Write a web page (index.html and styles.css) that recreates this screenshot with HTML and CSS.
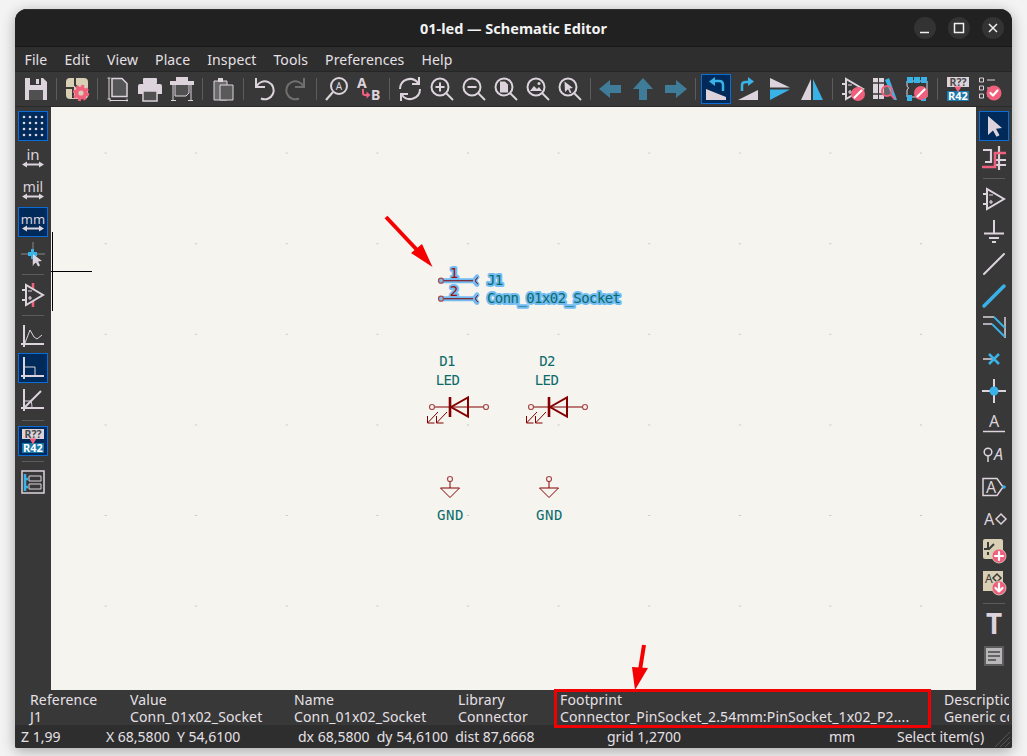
FILE: index.html
```html
<!DOCTYPE html>
<html lang="en">
<head>
<meta charset="utf-8">
<title>01-led — Schematic Editor</title>
<link rel="stylesheet" href="styles.css">
</head>
<body>
<svg class="defs" width="0" height="0" aria-hidden="true">
  <defs>
    <symbol id="pencil" viewBox="0 0 14 14"><circle class="f-r" cx="7" cy="7" r="7"/><path class="s-w" d="M3.5 10.5 10.5 3.5"/></symbol>
    <symbol id="amp" viewBox="0 0 24 24"><path class="s-l" d="M5 2v20L22 12z"/><path class="s-l" d="M1 7h4M1 17h4M5 12"/><path class="s-t" d="M7 8h4M7 15h4M9 13v4"/></symbol>
    <symbol id="mag" viewBox="0 0 24 24"><circle class="s-l" cx="10" cy="10" r="8.5"/><path class="s-l" d="M16 16l7 7"/></symbol>
    <symbol id="r42" viewBox="0 0 24 24"><rect class="f-l" x="1" y="0" width="22" height="10"/><text class="t-rq" x="12" y="8.8">R??</text><rect class="f-bd" x="1" y="14" width="22" height="10"/><text class="t-r42" x="12" y="23.3">R42</text><path class="f-r" d="M8.5 9.5h7L12 15.5z"/></symbol>
  </defs>
</svg>

<div class="window">
  <header class="titlebar">
    <h1 class="title">01-led — Schematic Editor</h1>
    <div class="winbtns">
      <span class="winbtn"><svg class="wico" viewBox="0 0 12 12"><path d="M1 10.5h9"/></svg></span>
      <span class="winbtn"><svg class="wico" viewBox="0 0 12 12"><rect x="1.5" y="1.5" width="9" height="9"/></svg></span>
      <span class="winbtn"><svg class="wico" viewBox="0 0 12 12"><path d="M2 2l8 8M10 2l-8 8"/></svg></span>
    </div>
  </header>

  <nav class="menubar">
    <span class="menu">File</span><span class="menu">Edit</span><span class="menu">View</span><span class="menu">Place</span><span class="menu">Inspect</span><span class="menu">Tools</span><span class="menu">Preferences</span><span class="menu">Help</span>
  </nav>

  <div class="toolbar hbar">
    <span class="tool"><svg class="ico" viewBox="0 0 24 24"><path class="f-l" d="M1 1h18l4 4v18H1z"/><rect class="f-d" x="6" y="1" width="11" height="7"/><rect class="f-l" x="12" y="2" width="3" height="5"/><rect class="f-g" x="5" y="13" width="14" height="10"/></svg></span>
    <i class="sep"></i>
    <span class="tool"><svg class="ico" viewBox="0 0 24 24"><rect class="f-y" x="1" y="1" width="22" height="21" rx="4"/><path class="s-k" d="M10 1v7l4 4M1 11h7v5M8 21v-5"/><circle class="f-r" cx="16" cy="16" r="6.5"/><circle class="s-gear" cx="16" cy="16" r="7"/><circle class="f-y" cx="16" cy="16" r="2.6"/></svg></span>
    <i class="sep"></i>
    <span class="tool"><svg class="ico" viewBox="0 0 24 24"><path class="s-th" d="M3 1v21M1.500 1h3M1.500 22h3M4 23.500h18M4 21.500v3M21 21.500v3"/><path class="s-p" d="M6 1.500h10l5 5v13H6z"/></svg></span>
    <span class="tool"><svg class="ico" viewBox="0 0 24 24"><rect class="f-l" x="5" y="1" width="14" height="6" rx="1"/><path class="f-l" d="M2 7h20q2 0 2 2v8h-5v-3H5v3H0V9q0-2 2-2z"/><rect class="f-g" x="6" y="14" width="12" height="9"/><path class="s-l2" d="M5 14h14v10H5z"/></svg></span>
    <span class="tool"><svg class="ico" viewBox="0 0 24 24"><rect class="f-l" x="6" y="0" width="12" height="4"/><rect class="f-l" x="0" y="4" width="24" height="4"/><path class="f-g" d="M5 8h14v8l-3 3H5z"/><path class="s-th" d="M5 8v11h11l3-3V8M3 8v15M21 8v15M1 23.500h5M18 23.500h5"/></svg></span>
    <i class="sep"></i>
    <span class="tool"><svg class="ico" viewBox="0 0 24 24"><rect class="f-g2" x="3" y="4" width="13" height="19"/><path class="s-th" d="M3 4h13v19H3z"/><rect class="f-l" x="7" y="1" width="5" height="4"/><rect class="f-g3" x="9" y="8" width="13" height="15"/><path class="s-th" d="M9 8h13v15H9z"/></svg></span>
    <i class="sep"></i>
    <span class="tool"><svg class="ico" viewBox="0 0 24 24"><path class="s-l" d="M4 1v9h9"/><path class="s-l" d="M4.500 9.500A9 9 0 1 1 9 21.500"/></svg></span>
    <span class="tool"><svg class="ico" viewBox="0 0 24 24"><path class="s-dim" d="M20 1v9h-9"/><path class="s-dim" d="M19.500 9.500A9 9 0 1 0 15 21.500"/></svg></span>
    <i class="sep"></i>
    <span class="tool"><svg class="ico" viewBox="0 0 24 24"><circle class="s-l" cx="14" cy="9" r="8"/><path class="s-l" d="M8 15l-7 8"/><text class="t-a" x="14" y="13">A</text></svg></span>
    <span class="tool"><svg class="ico" viewBox="0 0 24 24"><text class="t-ab" x="0" y="11">A</text><text class="t-ab" x="14" y="22.500">B</text><path class="s-r" d="M6 12v4q0 2 2 2h3"/><path class="f-r" d="M9.500 14.500l4 3.500-4 3.500z"/></svg></span>
    <i class="sep"></i>
    <span class="tool"><svg class="ico" viewBox="0 0 24 24"><path class="s-l" d="M2 12A10 10 0 0 1 20 6M22 12A10 10 0 0 1 4 18"/><path class="s-l" d="M21 0v7h-7M3 24v-7h7"/></svg></span>
    <span class="tool"><svg class="ico" viewBox="0 0 24 24"><use href="#mag" width="24" height="24"/><path class="s-l" d="M5.500 10h9M10 5.500v9"/></svg></span>
    <span class="tool"><svg class="ico" viewBox="0 0 24 24"><use href="#mag" width="24" height="24"/><path class="s-l" d="M5.500 10h9"/></svg></span>
    <span class="tool"><svg class="ico" viewBox="0 0 24 24"><use href="#mag" width="24" height="24"/><path class="f-l" d="M6 4.500h5l3 3v8H6z"/></svg></span>
    <span class="tool"><svg class="ico" viewBox="0 0 24 24"><use href="#mag" width="24" height="24"/><path class="f-l" d="M4 14l4-5 3 3 2-2 3 4z"/><circle class="f-l" cx="13" cy="6.500" r="1.500"/></svg></span>
    <span class="tool"><svg class="ico" viewBox="0 0 24 24"><use href="#mag" width="24" height="24"/><path class="f-l" d="M6.500 4.500 15 11l-3.500.5 2 4-1.500.7-2-4L7 15z"/></svg></span>
    <i class="sep"></i>
    <span class="tool"><svg class="ico" viewBox="0 0 24 24"><path class="f-n" d="M0 12 11 3v5h11v8H11v5z"/></svg></span>
    <span class="tool"><svg class="ico" viewBox="0 0 24 24"><path class="f-n" d="M12 1l10 11h-6v11H8V12H2z"/></svg></span>
    <span class="tool"><svg class="ico" viewBox="0 0 24 24"><path class="f-n" d="M24 12 13 3v5H2v8h11v5z"/></svg></span>
    <i class="sep"></i>
    <span class="tool on"><svg class="ico" viewBox="0 0 24 24"><path class="f-l" d="M2 12l20 8v3H2z"/><path class="s-b" d="M19 14V8q0-4-4-4H9"/><path class="f-b" d="M11 0v9L5 4.500z"/></svg></span>
    <span class="tool"><svg class="ico" viewBox="0 0 24 24"><path class="f-l" d="M22 13v10H2z"/><path class="s-b" d="M6 14V8q0-3 4-3h4"/><path class="f-b" d="M12 0v9l6-4.500z"/></svg></span>
    <span class="tool"><svg class="ico" viewBox="0 0 24 24"><path class="f-l" d="M2 1l20 9.500H2z"/><path class="f-b" d="M2 23l20-10.500H2z"/></svg></span>
    <span class="tool"><svg class="ico" viewBox="0 0 24 24"><path class="f-l" d="M11 2 1 23h10z"/><path class="f-b" d="M13 2l10 21H13z"/></svg></span>
    <i class="sep"></i>
    <span class="tool"><svg class="ico" viewBox="0 0 24 24"><use href="#amp" width="24" height="24"/><use href="#pencil" x="10" y="10" width="14" height="14"/></svg></span>
    <span class="tool"><svg class="ico" viewBox="0 0 24 24"><rect class="f-l" x="0" y="1" width="5" height="21"/><rect class="f-l" x="6" y="1" width="5" height="21"/><path class="s-k2" d="M0 6h11M0 17h11"/><path class="f-b" d="M12 3l4-2 8 22h-3z"/><circle class="s-rm" cx="14" cy="14" r="5"/><path class="s-rm" d="M18 18l4 4"/></svg></span>
    <span class="tool"><svg class="ico" viewBox="0 0 24 24"><path class="s-th" d="M2 4h20M2 20h20M2 4v5l1.500 2-1.500 2v7M22 4v16"/><rect class="f-b" x="2" y="0" width="6" height="6"/><rect class="f-b" x="9" y="0" width="6" height="6"/><rect class="f-b" x="16" y="0" width="6" height="6"/><rect class="f-b" x="2" y="18" width="5" height="6"/><rect class="f-b" x="16" y="18" width="5" height="6"/><use href="#pencil" x="9" y="9" width="14" height="14"/></svg></span>
    <i class="sep"></i>
    <span class="tool"><svg class="ico" viewBox="0 0 24 24"><use href="#r42" width="24" height="24"/></svg></span>
    <span class="tool"><svg class="ico" viewBox="0 0 24 24"><path class="s-th" d="M1.500 1h4v4h-4zM1.500 9h4v4h-4zM1.500 17h4v4h-4zM9 3h8M9 11h5M9 19h3"/><circle class="f-r" cx="16" cy="16" r="7.500"/><path class="s-w" d="M12.500 16l2.500 2.500 4.500-5"/></svg></span>
  </div>

  <div class="workspace">
    <aside class="vbar lbar">
      <span class="tool on"><svg class="ico" viewBox="0 0 24 24"><g class="f-l"><circle cx="3" cy="3" r="1.300"/><circle cx="9" cy="3" r="1.300"/><circle cx="15" cy="3" r="1.300"/><circle cx="21" cy="3" r="1.300"/><circle cx="3" cy="9" r="1.300"/><circle cx="9" cy="9" r="1.300"/><circle cx="15" cy="9" r="1.300"/><circle cx="21" cy="9" r="1.300"/><circle cx="3" cy="15" r="1.300"/><circle cx="9" cy="15" r="1.300"/><circle cx="15" cy="15" r="1.300"/><circle cx="21" cy="15" r="1.300"/><circle cx="3" cy="21" r="1.300"/><circle cx="9" cy="21" r="1.300"/><circle cx="15" cy="21" r="1.300"/><circle cx="21" cy="21" r="1.300"/></g></svg></span>
      <span class="tool"><svg class="ico" viewBox="0 0 24 24"><text class="t-unit t-in" x="12" y="13.500">in</text><path class="s-arr" d="M3 18.500h18"/><path class="f-l" d="M1 18.500l5-3v6zM23 18.500l-5-3v6z"/></svg></span>
      <span class="tool"><svg class="ico" viewBox="0 0 24 24"><text class="t-unit t-mil" x="12" y="14">mil</text><path class="s-arr" d="M3 18.500h18"/><path class="f-l" d="M1 18.500l5-3v6zM23 18.500l-5-3v6z"/></svg></span>
      <span class="tool on"><svg class="ico" viewBox="0 0 24 24"><text class="t-unit" x="12" y="14">mm</text><path class="s-arr" d="M3 18.500h18"/><path class="f-l" d="M1 18.500l5-3v6zM23 18.500l-5-3v6z"/></svg></span>
      <span class="tool"><svg class="ico" viewBox="0 0 24 24"><path class="s-thd" d="M12 0v24M0 12h24"/><path class="f-b" d="M10 7h3v3h3v4h-3v3h-3v-3H7v-4h3z"/><path class="f-l" d="M12 12l9 7-4 .5 2 4-2 1-2-4-3 2.500z"/></svg></span>
      <i class="sep"></i>
      <span class="tool"><svg class="ico" viewBox="0 0 24 24"><path class="s-r2" d="M12 0v6M12 18v6"/><use href="#amp" width="24" height="24"/></svg></span>
      <i class="sep"></i>
      <span class="tool"><svg class="ico" viewBox="0 0 24 24"><path class="s-l" d="M3 1v22M0 20h23"/><path class="s-th" d="M4 19 9 6l4 7 3 2 5-4"/></svg></span>
      <span class="tool on"><svg class="ico" viewBox="0 0 24 24"><path class="s-l" d="M3 1v22M0 20h23"/><path class="s-th" d="M3 11h11v9"/></svg></span>
      <span class="tool"><svg class="ico" viewBox="0 0 24 24"><path class="s-l" d="M3 1v22M0 20h23M3 20 20 3"/><path class="s-th" d="M3 13h7q1 3 1 7"/></svg></span>
      <i class="sep"></i>
      <span class="tool on"><svg class="ico" viewBox="0 0 24 24"><use href="#r42" width="24" height="24"/></svg></span>
      <i class="sep"></i>
      <span class="tool"><svg class="ico" viewBox="0 0 24 24"><path class="s-l2" d="M1 1h22v22H1z"/><path class="s-b" d="M4 4v17M4 9h3M4 17h3"/><path class="s-th" d="M8 6h12v5H8zM8 14h12v5H8z"/></svg></span>
    </aside>

    <main class="canvas">
      <svg class="sheet" viewBox="51 107 925 583" preserveAspectRatio="xMinYMin">
        <defs>
          <pattern id="griddots" x="14" y="62" width="90.6" height="90.600" patternUnits="userSpaceOnUse"><rect class="griddot" x="0" y="0" width="2" height="1"/></pattern>
        </defs>
        <rect x="51" y="107" width="925" height="583" fill="url(#griddots)"/>

        <path class="cursor" d="M52.500 232v79M51 271.500H92"/>

        <g class="sel">
          <path class="halo" d="M441 280.700h32M441 298.700h32M477 277q-4 3.700 0 7.400M477 295q-4 3.700 0 7.400"/>
          <text class="pinnum halotxt" x="454" y="278">1</text>
          <text class="pinnum halotxt" x="454" y="296">2</text>
          <path class="wire" d="M443 280.700h30M443 298.700h30"/>
          <path class="thin" d="M478 277.300q-5 3.400 0 6.800M478 295.300q-5 3.400 0 6.800"/>
          <circle class="pin" cx="441" cy="280.700" r="2.500"/>
          <circle class="pin" cx="441" cy="298.700" r="2.500"/>
          <text class="field halotxt" x="487" y="285">J1</text>
          <text class="field halotxt" x="487" y="303">Conn_01x02_Socket</text>
        </g>

        <g>
          <text class="field mid" x="447" y="366">D1</text>
          <text class="field mid" x="447.500" y="385">LED</text>
          <path class="wire" d="M434 407h50"/>
          <path class="bar" d="M450 397v20"/>
          <path class="tri" d="M451 407 468 397.500v19z"/>
          <path class="thin" d="M438 412 427.500 423M447 412 436.500 423M427.500 416v7h7M436.500 416v7h7"/>
          <circle class="pin" cx="432" cy="407" r="2.500"/>
          <circle class="pin" cx="486" cy="407" r="2.500"/>
        </g>
        <g>
          <text class="field mid" x="547" y="366">D2</text>
          <text class="field mid" x="546.500" y="385">LED</text>
          <path class="wire" d="M533 407h50"/>
          <path class="bar" d="M549 397v20"/>
          <path class="tri" d="M550 407 567 397.500v19z"/>
          <path class="thin" d="M537 412 526.500 423M546 412 535.500 423M526.500 416v7h7M535.500 416v7h7"/>
          <circle class="pin" cx="531" cy="407" r="2.500"/>
          <circle class="pin" cx="585" cy="407" r="2.500"/>
        </g>
        <g>
          <circle class="pin" cx="450" cy="479" r="2.500"/>
          <path class="thin" d="M450 481.500V488M440.500 488h19L450 497.500z"/>
          <text class="field mid wide" x="450.500" y="520">GND</text>
        </g>
        <g>
          <circle class="pin" cx="549" cy="479" r="2.500"/>
          <path class="thin" d="M549 481.500V488M539.500 488h19L549 497.500z"/>
          <text class="field mid wide" x="549.500" y="520">GND</text>
        </g>

        <path class="arrow-line" d="M386 217 418 251"/>
        <path class="arrow-head" d="M432.500 267 411 253 422 244z"/>
        <path class="arrow-line" d="M644 645 640 670"/>
        <path class="arrow-head" d="M635 690 632 667 648 668z"/>
      </svg>
    </main>

    <aside class="vbar rbar">
      <span class="tool on"><svg class="ico" viewBox="0 0 24 24"><path class="f-l" d="M6 2l14 12-6 .8 3.500 6.500-3 1.500L11 16.500 6 21z"/></svg></span>
      <span class="tool"><svg class="ico" viewBox="0 0 24 24"><path class="s-th2" d="M1 4h8v12H3M17 0v24M13 14h11M13 19h11"/><path class="s-rw" d="M0 21h13V7h11"/></svg></span>
      <i class="sep"></i>
      <span class="tool"><svg class="ico" viewBox="0 0 24 24"><use href="#amp" width="24" height="24"/></svg></span>
      <span class="tool"><svg class="ico" viewBox="0 0 24 24"><path class="s-l" d="M12 1v13M2 14.500h20M7 19h10M10 23h4"/></svg></span>
      <span class="tool"><svg class="ico" viewBox="0 0 24 24"><path class="s-lr" d="M2 23 22 3"/></svg></span>
      <span class="tool"><svg class="ico" viewBox="0 0 24 24"><path class="s-bw" d="M2 23 22 3"/></svg></span>
      <span class="tool"><svg class="ico" viewBox="0 0 24 24"><path class="s-l2" d="M23 2v21M1 2h11M1 9h9"/><path class="s-b2" d="M12 2l11 11M10 9l13 13"/></svg></span>
      <span class="tool"><svg class="ico" viewBox="0 0 24 24"><path class="s-l2" d="M1 12h12"/><path class="s-b" d="M7 7l10 10M17 7 7 17"/></svg></span>
      <span class="tool"><svg class="ico" viewBox="0 0 24 24"><path class="s-l" d="M12 0v24M0 12h24"/><circle class="f-b" cx="12" cy="12" r="4.500"/></svg></span>
      <span class="tool"><svg class="ico" viewBox="0 0 24 24"><text class="t-label" x="12" y="16">A</text><path class="s-l2" d="M1 20.500h22"/></svg></span>
      <span class="tool"><svg class="ico" viewBox="0 0 24 24"><circle class="s-l2" cx="6" cy="9" r="3.800"/><path class="s-l2" d="M6 13v6"/><text class="t-label it" x="16.500" y="17">A</text></svg></span>
      <span class="tool"><svg class="ico" viewBox="0 0 24 24"><path class="s-l2" d="M1 3.500h14l6 8.500-6 8.500H1z"/><text class="t-label" x="9" y="17.500">A</text><circle class="f-b" cx="22" cy="12" r="1.800"/></svg></span>
      <span class="tool"><svg class="ico" viewBox="0 0 24 24"><text class="t-label" x="7" y="18">A</text><path class="s-l2" d="M19 7l5 5-5 5-5-5z"/></svg></span>
      <span class="tool"><svg class="ico" viewBox="0 0 24 24"><rect class="f-y" x="1" y="0" width="20" height="20" rx="2"/><path class="s-k" d="M6 3v6M2 10h5l5-5M6 16v-3"/><circle class="s-whc" cx="17" cy="17" r="7"/><path class="s-w" d="M13 17h8M17 13v8"/></svg></span>
      <span class="tool"><svg class="ico" viewBox="0 0 24 24"><rect class="f-y" x="1" y="0" width="20" height="20"/><text class="t-small" x="3" y="12">A</text><path class="s-k2" d="M15 3l4 4-4 4-4-4z"/><circle class="s-whc" cx="17" cy="17" r="7"/><path class="s-w" d="M17 12.500v8M13.500 17l3.500 3.500 3.500-3.500"/></svg></span>
      <i class="sep"></i>
      <span class="tool"><svg class="ico" viewBox="0 0 24 24"><text class="t-t" x="12" y="22">T</text></svg></span>
      <span class="tool"><svg class="ico" viewBox="0 0 24 24"><rect class="f-g4" x="2" y="2" width="20" height="20"/><rect class="f-pale" x="4" y="4" width="16" height="16"/><path class="s-note" d="M6 8h12M6 12h12M6 16h8"/></svg></span>
    </aside>
  </div>

  <section class="msgpanel">
    <div class="msg w-ref"><span>Reference</span><span>J1</span></div>
    <div class="msg w-val"><span>Value</span><span>Conn_01x02_Socket</span></div>
    <div class="msg w-val"><span>Name</span><span>Conn_01x02_Socket</span></div>
    <div class="msg w-lib"><span>Library</span><span>Connector</span></div>
    <div class="msg w-fp"><span>Footprint</span><span>Connector_PinSocket_2.54mm:PinSocket_1x02_P2....</span><b class="callout"></b></div>
    <div class="msg w-desc"><span>Description</span><span>Generic connector</span></div>
  </section>

  <footer class="statusbar">
    <span class="st st-z">Z 1,99</span>
    <span class="st st-xy">X 68,5800&nbsp; Y 54,6100</span>
    <span class="st st-d">dx 68,5800&nbsp; dy 54,6100&nbsp; dist 87,6668</span>
    <span class="st st-g">grid 1,2700</span>
    <span class="st st-u">mm</span>
    <span class="st st-s">Select item(s)</span>
    <svg class="grip" viewBox="0 0 16 16"><path d="M1 16 16 1M6 16 16 6M11 16l5-5"/></svg>
  </footer>
</div>
</body>
</html>
```
FILE: styles.css
```css
* { box-sizing: border-box; }
html, body { margin: 0; height: 100%; }
body {
  background: #f3f3f3;
  font-family: "Noto Sans", sans-serif;
  font-size: 14px;
  color: #e6e0e6;
  padding: 9px 15px 8px;
  overflow: hidden;
}
.defs { position: absolute; }

.window {
  height: 739px;
  display: flex;
  flex-direction: column;
  border-radius: 12px 12px 2px 2px;
  overflow: hidden;
  background: #383838;
  box-shadow: 0 3px 14px rgba(0, 0, 0, .32);
}

/* title bar */
.titlebar {
  flex: 0 0 38px;
  display: flex;
  align-items: center;
  justify-content: center;
  position: relative;
  background: #212121;
  border-top: 1px solid #303030;
  border-bottom: 1px solid #171717;
}
.title { margin: 0; font-size: 14.500px; font-weight: 700; color: #f2f2f2; }
.winbtns { position: absolute; right: 8px; top: 7px; display: flex; gap: 12px; }
.winbtn { width: 22px; height: 22px; border-radius: 50%; background: #333; display: flex; align-items: center; justify-content: center; }
.wico { width: 12px; height: 12px; fill: none; stroke: #f0f0f0; stroke-width: 1.500; }

/* menu */
.menubar {
  flex: 0 0 25px;
  display: flex;
  align-items: center;
  padding-left: 1px;
  background: #2e2e2e;
  border-bottom: 1px solid #262626;
  letter-spacing: .12px;
}
.menu { padding: 0 8.500px; }

/* toolbars */
.toolbar {
  flex: 0 0 35px;
  background: #383838;
  border-bottom: 1px solid #2a2a2a;
}
.hbar { display: flex; align-items: center; padding-left: 5px; }
.tool { flex: none; width: 32px; height: 32px; display: flex; align-items: center; justify-content: center; }
.tool.on { position: relative; }
.tool.on::before {
  content: "";
  position: absolute;
  inset: 1px;
  background: #002a5a;
  border: 1px solid #0a6ed6;
}
.ico { width: 24px; height: 24px; position: relative; overflow: visible; }
.sep { flex: none; position: relative; display: block; }
.hbar .sep { width: 9px; height: 22px; background: linear-gradient(#5c5c5c, #5c5c5c) center / 1px 100% no-repeat; }
.vbar .sep { width: 22px; height: 9px; background: linear-gradient(#5c5c5c, #5c5c5c) center / 100% 1px no-repeat; }

.workspace { flex: 1; display: flex; min-height: 0; }
.vbar { flex: 0 0 36px; display: flex; flex-direction: column; align-items: center; padding-top: 3px; background: #383838; }
.canvas { flex: 1; min-width: 0; background: #f5f4ef; position: relative; }
.sheet { display: block; width: 925px; height: 583px; overflow: visible; position: absolute; left: 0; top: 0; }

/* message panel */
.msgpanel { flex: 0 0 35px; display: flex; padding: 1px 0 0 15px; background: #383838; font-size: 14px; line-height: 17px; letter-spacing: .15px; position: relative; z-index: 1; }
.msg { flex: none; display: flex; flex-direction: column; position: relative; white-space: nowrap; }
.w-ref { width: 100px; }
.w-val { width: 164px; }
.w-lib { width: 102px; }
.w-fp { width: 384px; }
.w-desc { width: 65px; overflow: hidden; height: 34px; }
.callout { position: absolute; left: -6px; top: -2px; width: 377px; height: 39px; border: 3px solid #f00000; }

/* status bar */
.statusbar { flex: 0 0 23px; display: flex; align-items: center; background: #2e2e2e; position: relative; font-size: 14px; white-space: nowrap; }
.st { flex: none; }
.st-z { width: 91px; padding-left: 6px; }
.st-xy { width: 192px; }
.st-d { width: 309px; }
.st-g { width: 222px; }
.st-u { width: 68px; }
.grip { width: 16px; height: 16px; position: absolute; right: 2px; bottom: 1px; fill: none; stroke: #555; stroke-width: 1; }

/* schematic */
.griddot { fill: #c9c9c4; }
.cursor { fill: none; stroke: #000; stroke-width: 1; }
.wire { fill: none; stroke: #840000; stroke-width: 1.100; }
.thin { fill: none; stroke: #840000; stroke-width: 1; }
.bar { fill: none; stroke: #840000; stroke-width: 2.600; }
.tri { fill: none; stroke: #840000; stroke-width: 2; }
.pin { fill: none; stroke: #a84a4a; stroke-width: 1.200; }
.halo { fill: none; stroke: #72bcf2; stroke-width: 5; stroke-linecap: round; }
.field { font-family: "DejaVu Sans Mono", monospace; font-size: 14px; letter-spacing: -.58px; fill: #0b6b6b; }
.mid { text-anchor: middle; }
.wide { letter-spacing: .6px; }
.pinnum { font-family: "DejaVu Sans Mono", monospace; font-size: 14px; fill: #9c1010; text-anchor: middle; }
.halotxt { stroke: #72bcf2; stroke-width: 4px; stroke-linejoin: round; paint-order: stroke; }
.arrow-line { fill: none; stroke: #f40000; stroke-width: 4; }
.arrow-head { fill: #f40000; }

/* icon paints */
.f-l { fill: #dcd3dc; }
.f-d { fill: #383838; }
.f-g { fill: #505050; }
.f-g2 { fill: #6a6a6a; }
.f-g3 { fill: #5a5a5a; }
.f-g4 { fill: #5c5c5c; }
.f-pale { fill: #b9b6ba; }
.f-r { fill: #f0607c; }
.f-b { fill: #39b2e8; }
.f-bd { fill: #1a78aa; }
.f-n { fill: #3f7c9a; }
.f-y { fill: #d8cfb4; }
.s-l { fill: none; stroke: #dcd3dc; stroke-width: 2; }
.s-l2 { fill: none; stroke: #dcd3dc; stroke-width: 1.500; }
.s-arr { fill: none; stroke: #dcd3dc; stroke-width: 2; }
.s-lr { fill: none; stroke: #dcd3dc; stroke-width: 2; stroke-linecap: round; }
.s-th { fill: none; stroke: #dcd3dc; stroke-width: 1; }
.s-th2 { fill: none; stroke: #dcd3dc; stroke-width: 2.200; }
.s-thd { fill: none; stroke: #8a868a; stroke-width: 1; }
.s-t { fill: none; stroke: #dcd3dc; stroke-width: 1.200; }
.s-p { fill: #555; stroke: #dcd3dc; stroke-width: 1.500; }
.s-dim { fill: none; stroke: #6f6f6f; stroke-width: 2; }
.s-k { fill: none; stroke: #3a3a38; stroke-width: 2; }
.s-k2 { fill: none; stroke: #3a3a38; stroke-width: 1.500; }
.s-w { fill: none; stroke: #fff; stroke-width: 2.200; stroke-linecap: round; stroke-linejoin: round; }
.s-r { fill: none; stroke: #f0607c; stroke-width: 2; }
.s-r2 { fill: none; stroke: #f0607c; stroke-width: 2.500; }
.s-rm { fill: #c9c4ca55; stroke: #f0607c; stroke-width: 2; }
.s-rw { fill: none; stroke: #f0607c; stroke-width: 2.600; }
.s-b { fill: none; stroke: #39b2e8; stroke-width: 2.500; }
.s-b2 { fill: none; stroke: #39b2e8; stroke-width: 1.800; }
.s-bw { fill: none; stroke: #39b2e8; stroke-width: 3.500; stroke-linecap: round; }
.s-gear { fill: none; stroke: #f0607c; stroke-width: 2.500; stroke-dasharray: 3 2.500; }
.s-whc { fill: #f0607c; stroke: #d8d0c0; stroke-width: .800; }
.s-note { fill: none; stroke: #4a4a4a; stroke-width: 1.500; }

/* icon text */
.ico text { font-family: "Noto Sans", sans-serif; }
.t-a { fill: #dcd3dc; font-size: 10px; text-anchor: middle; }
.t-ab { fill: #dcd3dc; font-size: 14px; font-weight: 700; }
.t-rq { fill: #4a4a4a; font-size: 10.500px; font-weight: 700; text-anchor: middle; }
.t-r42 { fill: #fff; font-size: 11px; font-weight: 700; text-anchor: middle; }
.t-unit { fill: #dcd3dc; font-size: 13px; text-anchor: middle; }
.t-in { font-size: 15px; }
.t-mil { font-size: 14px; }
.t-label { fill: #dcd3dc; font-size: 16px; text-anchor: middle; }
.it { font-style: italic; }
.t-small { fill: #3a3a38; font-size: 12px; }
.t-t { fill: #dcd3dc; font-size: 28px; font-weight: 700; text-anchor: middle; }
```
